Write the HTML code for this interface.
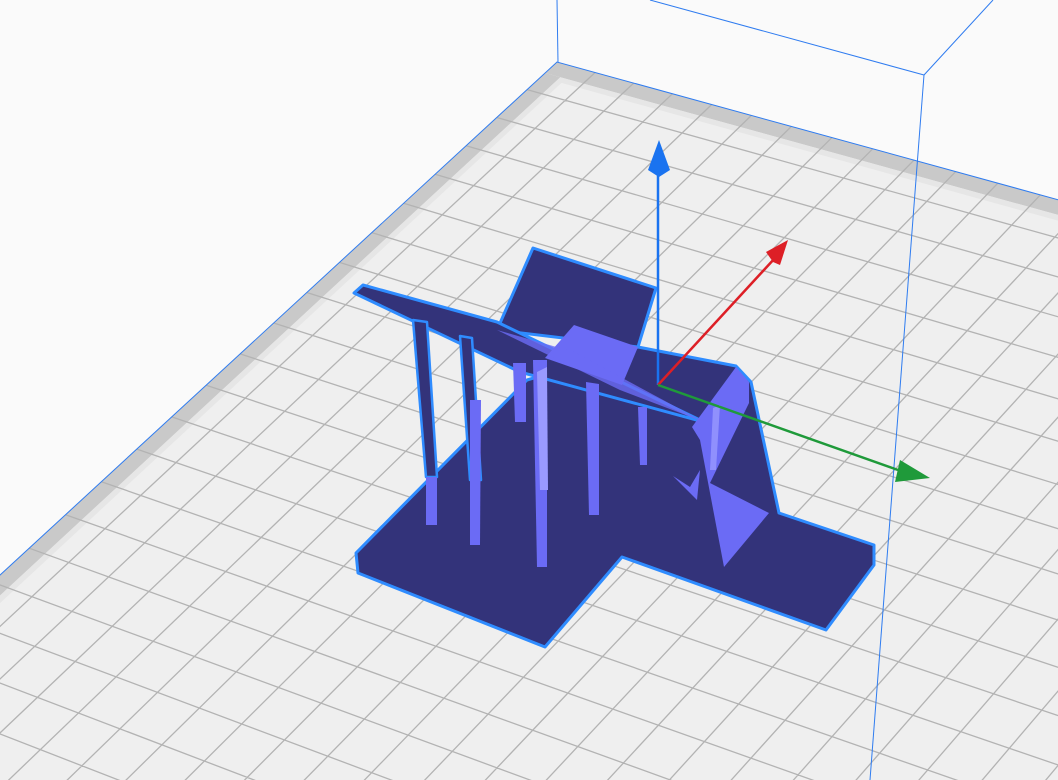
<!DOCTYPE html>
<html><head><meta charset="utf-8"><style>
html,body{margin:0;padding:0;background:#fafafa;overflow:hidden;width:1058px;height:780px}
svg{display:block}
</style></head><body>
<svg id="s" width="1058" height="780" viewBox="0 0 1058 780" xmlns="http://www.w3.org/2000/svg">
<rect width="1058" height="780" fill="#fafafa"/>
<g id="plate"></g>
<g stroke="#2f7cf0" stroke-width="1" fill="none">
<line x1="557" y1="0" x2="558" y2="62"/>
<line x1="650" y1="0" x2="924" y2="75"/>
<line x1="924" y1="75" x2="993" y2="0"/>
<line x1="924" y1="75" x2="870" y2="780"/>
</g>
<g stroke-linejoin="round">
<polygon points="356,553 527,380 638,347 736,366 751,382 779,513 874,545 874,565 826,630 622,557 545,647 358,573" fill="#33337a" stroke="#2f8cff" stroke-width="3"/>
<polygon points="533,248 656,288 638,347 497,330" fill="#33337a" stroke="#2f8cff" stroke-width="3"/>
<polygon points="354,293 363,285 497,322 704,422 520,372" fill="#33337a" stroke="#2f8cff" stroke-width="3"/>
<polygon points="413,320 427,322 437,477 426,477" fill="#33337a" stroke="#2f8cff" stroke-width="2.5"/>
<polygon points="460,336 472,338 481,480 470,480" fill="#33337a" stroke="#2f8cff" stroke-width="2.5"/>
<g fill="#6b6bf5">
<polygon points="426,477 437,477 437,525 426,525"/>
<polygon points="470,400 481,400 480,545 470,545"/>
<polygon points="513,363 526,363 526,422 515,422"/>
<polygon points="533,360 547,360 547,567 537,567"/>
<polygon points="586,382 599,384 599,515 589,515"/>
<polygon points="638,407 647,407 647,465 640,465"/>
<polygon points="574,325 638,347 622,385 545,358" />
<polygon points="497,330 574,352 704,422 620,390" opacity="0.8"/>
<polygon points="692,427 736,367 749,382 749,403 710,483 769,513 724,567 700,440"/>
<polygon points="673,476 690,487 700,470 697,500"/>
</g>
<polygon points="537,372 547,367 548,490 540,490" fill="#9a9aff"/>
<polygon points="713,408 720,405 716,470 710,470" fill="#9a9aff" opacity="0.8"/>
</g>
<g stroke-width="2.5">
<line x1="658" y1="385" x2="658" y2="175" stroke="#1a73f0"/>
<line x1="658" y1="385" x2="775" y2="258" stroke="#dd1f26"/>
<line x1="658" y1="385" x2="898" y2="470" stroke="#1f9a3a"/>
</g>
<polygon points="659,140 648,170 659,177 670,170" fill="#1a73f0"/>
<polygon points="788,240 766,252 773,262 780,265" fill="#dd1f26"/>
<polygon points="930,478 900,460 895,482" fill="#1f9a3a"/>
</svg>
<script>
(function(){
var ns="http://www.w3.org/2000/svg";
var P=[[557,62],[1019,189],[665,560],[189,401]];
var x0=P[0][0],y0=P[0][1],x1=P[1][0],y1=P[1][1],x2=P[2][0],y2=P[2][1],x3=P[3][0],y3=P[3][1];
var dx1=x1-x2,dx2=x3-x2,dx3=x0-x1+x2-x3,dy1=y1-y2,dy2=y3-y2,dy3=y0-y1+y2-y3;
var den=dx1*dy2-dx2*dy1;
var g=(dx3*dy2-dx2*dy3)/den,h=(dx1*dy3-dx3*dy1)/den;
var a=x1-x0+g*x1,b=x3-x0+h*x3,c=x0,d=y1-y0+g*y1,e=y3-y0+h*y3,f=y0;
function m(u,v){u/=11.5;v/=11.5;var w=g*u+h*v+1;return [(a*u+b*v+c)/w,(d*u+e*v+f)/w];}
var G=document.getElementById("plate");
var N=40;
function poly(pts,fill){var p=document.createElementNS(ns,"polygon");p.setAttribute("points",pts.map(function(q){var r=m(q[0],q[1]);return r[0].toFixed(1)+","+r[1].toFixed(1)}).join(" "));p.setAttribute("fill",fill);G.appendChild(p);}
poly([[0,0],[N,0],[N,N],[0,N]],"#efefef");
poly([[0,0],[N,0],[N,0.4],[0,0.4]],"#c9c9c9");
poly([[0,0.4],[0.4,0.4],[0.4,N],[0,N]],"#c9c9c9");
poly([[0.4,0.4],[N,0.4],[N,0.55],[0.55,0.55],[0.55,N],[0.4,N]],"#e6e6e6");
var path="";
for(var i=1;i<=N;i++){
 var s=m(i,0),t=m(i,N);path+="M"+s[0].toFixed(1)+" "+s[1].toFixed(1)+"L"+t[0].toFixed(1)+" "+t[1].toFixed(1);
 s=m(0,i);t=m(N,i);path+="M"+s[0].toFixed(1)+" "+s[1].toFixed(1)+"L"+t[0].toFixed(1)+" "+t[1].toFixed(1);
}
var pe=document.createElementNS(ns,"path");pe.setAttribute("d",path);pe.setAttribute("stroke","#b3b3b3");pe.setAttribute("stroke-width","1.3");pe.setAttribute("fill","none");G.appendChild(pe);
var ed=document.createElementNS(ns,"path");var A=m(0,0),B=m(N,0),C=m(0,N);
ed.setAttribute("d","M"+B[0]+" "+B[1]+"L"+A[0]+" "+A[1]+"L"+C[0]+" "+C[1]);ed.setAttribute("stroke","#2f7cf0");ed.setAttribute("fill","none");ed.setAttribute("stroke-width","1");G.appendChild(ed);
})();
</script>
</body></html>
